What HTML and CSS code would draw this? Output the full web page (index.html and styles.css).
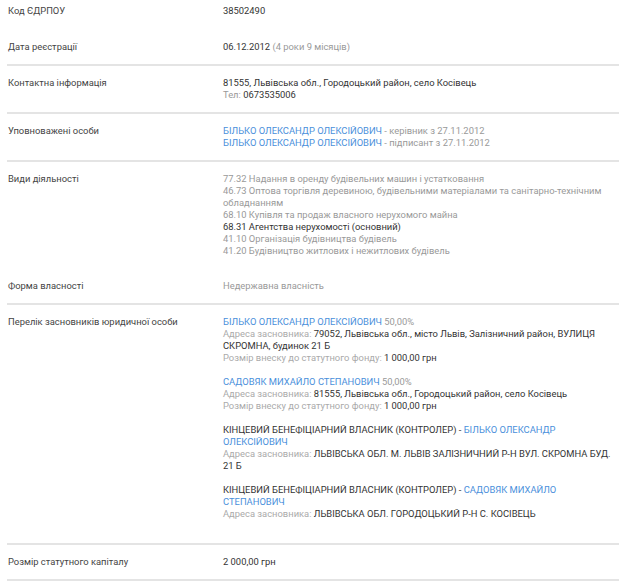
FILE: index.html
```html
<!DOCTYPE html>
<html lang="uk">
<head>
    <meta charset="UTF-8">
    <title>Реквізити компанії</title>
    <link rel="stylesheet" href="styles.css">
</head>
<body>
    <div class="company-info">
        <div class="info-row first no-line">
            <div class="info-label">Код ЄДРПОУ</div>
            <div class="info-value">38502490</div>
        </div>

        <div class="info-row">
            <div class="info-label">Дата реєстрації</div>
            <div class="info-value">06.12.2012 <span class="muted">(4 роки 9 місяців)</span></div>
        </div>

        <div class="info-row">
            <div class="info-label">Контактна інформація</div>
            <div class="info-value">
                81555, Львівська обл., Городоцький район, село Косівець<br>
                <span class="muted">Тел:</span> 0673535006
            </div>
        </div>

        <div class="info-row">
            <div class="info-label">Уповноважені особи</div>
            <div class="info-value">
                <a href="#">БІЛЬКО ОЛЕКСАНДР ОЛЕКСІЙОВИЧ</a> <span class="muted">- керівник з 27.11.2012</span><br>
                <a href="#">БІЛЬКО ОЛЕКСАНДР ОЛЕКСІЙОВИЧ</a> <span class="muted">- підписант з 27.11.2012</span>
            </div>
        </div>

        <!-- Види діяльності -->
        <div class="info-row no-line activities">
            <div class="info-label">Види діяльності</div>
            <div class="info-value muted">
                <div>77.32 Надання в оренду будівельних машин і устатковання</div>
                <div>46.73 Оптова торгівля деревиною, будівельними матеріалами та санітарно-технічним обладнанням</div>
                <div>68.10 Купівля та продаж власного нерухомого майна</div>
                <div class="main-activity">68.31 Агентства нерухомості (основний)</div>
                <div>41.10 Організація будівництва будівель</div>
                <div>41.20 Будівництво житлових і нежитлових будівель</div>
            </div>
        </div>

        <div class="info-row">
            <div class="info-label">Форма власності</div>
            <div class="info-value muted">Недержавна власність</div>
        </div>

        <!-- Засновники -->
        <div class="info-row founders">
            <div class="info-label">Перелік засновників юридичної особи</div>
            <div class="info-value">
                <div class="founder">
                    <a href="#">БІЛЬКО ОЛЕКСАНДР ОЛЕКСІЙОВИЧ</a> <span class="muted">50,00%</span><br>
                    <span class="light">Адреса засновника:</span> 79052, Львівська обл., місто Львів, Залізничний район, ВУЛИЦЯ СКРОМНА, будинок 21 Б<br>
                    <span class="light">Розмір внеску до статутного фонду:</span> 1 000,00 грн
                </div>
                <div class="founder">
                    <a href="#">САДОВЯК МИХАЙЛО СТЕПАНОВИЧ</a> <span class="muted">50,00%</span><br>
                    <span class="light">Адреса засновника:</span> 81555, Львівська обл., Городоцький район, село Косівець<br>
                    <span class="light">Розмір внеску до статутного фонду:</span> 1 000,00 грн
                </div>
                <div class="founder">
                    КІНЦЕВИЙ БЕНЕФІЦІАРНИЙ ВЛАСНИК (КОНТРОЛЕР) - <a href="#">БІЛЬКО ОЛЕКСАНДР ОЛЕКСІЙОВИЧ</a><br>
                    <span class="light">Адреса засновника:</span> ЛЬВІВСЬКА ОБЛ. М. ЛЬВІВ ЗАЛІЗНИЧНИЙ Р-Н ВУЛ. СКРОМНА БУД. 21 Б
                </div>
                <div class="founder">
                    КІНЦЕВИЙ БЕНЕФІЦІАРНИЙ ВЛАСНИК (КОНТРОЛЕР) - <a href="#">САДОВЯК МИХАЙЛО СТЕПАНОВИЧ</a><br>
                    <span class="light">Адреса засновника:</span> ЛЬВІВСЬКА ОБЛ. ГОРОДОЦЬКИЙ Р-Н С. КОСІВЕЦЬ
                </div>
            </div>
        </div>

        <div class="info-row">
            <div class="info-label">Розмір статутного капіталу</div>
            <div class="info-value">2 000,00 грн</div>
        </div>
    </div>
</body>
</html>
```

FILE: styles.css
```css
body {
    margin: 0;
    padding: 0;
    background: #fff;
    font-family: Roboto, 'Liberation Sans', sans-serif;
    font-size: 9.4px;
    line-height: 12px;
    color: #333;
}

a {
    color: #4a8fdb;
    text-decoration: none;
}

.company-info {
    margin: 0 5px 0 7px;
}

.info-row {
    display: flex;
    padding: 11px 0;
    border-bottom: 2px solid #e4e4e4;
}

.info-row.first {
    padding-top: 5px;
}

.info-row.no-line {
    border-bottom-color: transparent;
}

.info-row.activities {
    padding-bottom: 10px;
}

.info-label {
    width: 215px;
    flex-shrink: 0;
    padding-left: 1px;
    color: #444;
}

.info-value {
    flex: 1;
    min-width: 0;
}

.muted {
    color: #999;
}

.light {
    color: #aaa;
}

.main-activity {
    color: #333;
}

.founder {
    margin-bottom: 12px;
}
```
